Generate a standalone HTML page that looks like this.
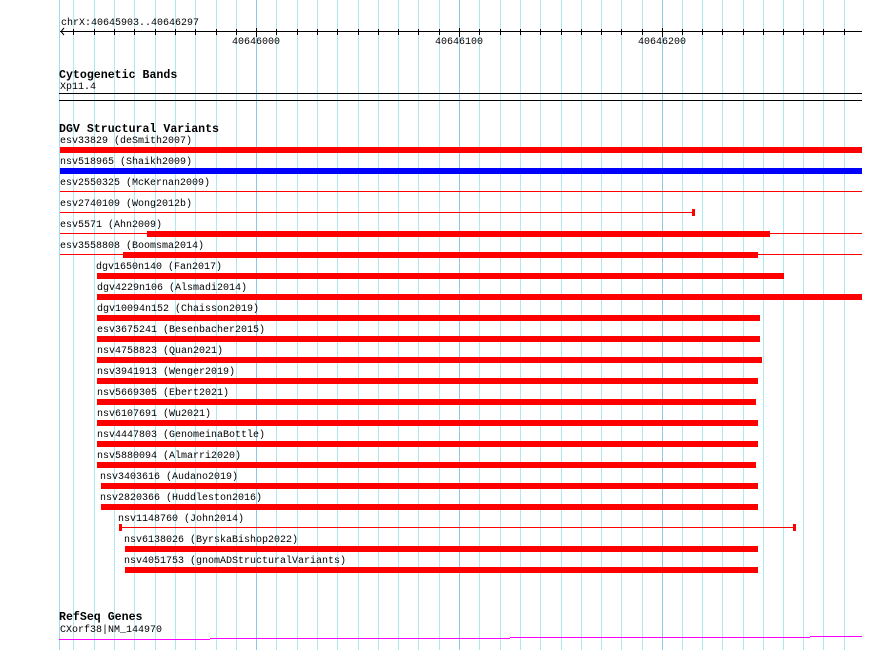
<!DOCTYPE html>
<html><head><meta charset="utf-8"><style>
html,body{margin:0;padding:0;background:#fff;width:890px;height:650px;overflow:hidden}
svg{display:block}
text{font-family:"Liberation Mono","DejaVu Sans Mono",monospace;font-size:10px;fill:#000}
.h{font-weight:bold;font-size:11.6px}
</style></head><body>
<svg width="890" height="650" viewBox="0 0 890 650" xmlns="http://www.w3.org/2000/svg" shape-rendering="crispEdges">
<g id="grid" stroke="#aee9ef" stroke-width="1">
<line x1="59.5" y1="0" x2="59.5" y2="650" stroke="#9fdcea"/>
<line x1="73.5" y1="0" x2="73.5" y2="650"/>
<line x1="94.5" y1="0" x2="94.5" y2="650"/>
<line x1="114.5" y1="0" x2="114.5" y2="650"/>
<line x1="134.5" y1="0" x2="134.5" y2="650"/>
<line x1="155.5" y1="0" x2="155.5" y2="650"/>
<line x1="175.5" y1="0" x2="175.5" y2="650"/>
<line x1="195.5" y1="0" x2="195.5" y2="650"/>
<line x1="216.5" y1="0" x2="216.5" y2="650"/>
<line x1="236.5" y1="0" x2="236.5" y2="650"/>
<line x1="256.5" y1="0" x2="256.5" y2="650" stroke="#8cc8ea"/>
<line x1="276.5" y1="0" x2="276.5" y2="650"/>
<line x1="297.5" y1="0" x2="297.5" y2="650"/>
<line x1="317.5" y1="0" x2="317.5" y2="650"/>
<line x1="337.5" y1="0" x2="337.5" y2="650"/>
<line x1="358.5" y1="0" x2="358.5" y2="650"/>
<line x1="378.5" y1="0" x2="378.5" y2="650"/>
<line x1="398.5" y1="0" x2="398.5" y2="650"/>
<line x1="418.5" y1="0" x2="418.5" y2="650"/>
<line x1="439.5" y1="0" x2="439.5" y2="650"/>
<line x1="459.5" y1="0" x2="459.5" y2="650" stroke="#8cc8ea"/>
<line x1="479.5" y1="0" x2="479.5" y2="650"/>
<line x1="500.5" y1="0" x2="500.5" y2="650"/>
<line x1="520.5" y1="0" x2="520.5" y2="650"/>
<line x1="540.5" y1="0" x2="540.5" y2="650"/>
<line x1="561.5" y1="0" x2="561.5" y2="650"/>
<line x1="581.5" y1="0" x2="581.5" y2="650"/>
<line x1="601.5" y1="0" x2="601.5" y2="650"/>
<line x1="621.5" y1="0" x2="621.5" y2="650"/>
<line x1="642.5" y1="0" x2="642.5" y2="650"/>
<line x1="662.5" y1="0" x2="662.5" y2="650" stroke="#8cc8ea"/>
<line x1="682.5" y1="0" x2="682.5" y2="650"/>
<line x1="702.5" y1="0" x2="702.5" y2="650"/>
<line x1="722.5" y1="0" x2="722.5" y2="650"/>
<line x1="743.5" y1="0" x2="743.5" y2="650"/>
<line x1="763.5" y1="0" x2="763.5" y2="650"/>
<line x1="783.5" y1="0" x2="783.5" y2="650"/>
<line x1="803.5" y1="0" x2="803.5" y2="650"/>
<line x1="823.5" y1="0" x2="823.5" y2="650"/>
<line x1="844.5" y1="0" x2="844.5" y2="650"/>
</g>
<!-- ruler -->
<text x="61" y="25">chrX:40645903..40646297</text>
<line x1="60" y1="31.5" x2="862" y2="31.5" stroke="#000"/>
<path d="M64 28 L61 31.5 L64 35" fill="none" stroke="#000" shape-rendering="auto"/>
<g stroke="#000">
<line x1="73.5" y1="29" x2="73.5" y2="35"/><line x1="94.5" y1="29" x2="94.5" y2="35"/><line x1="114.5" y1="29" x2="114.5" y2="35"/><line x1="134.5" y1="29" x2="134.5" y2="35"/><line x1="155.5" y1="29" x2="155.5" y2="35"/><line x1="175.5" y1="29" x2="175.5" y2="35"/><line x1="195.5" y1="29" x2="195.5" y2="35"/><line x1="216.5" y1="29" x2="216.5" y2="35"/><line x1="236.5" y1="29" x2="236.5" y2="35"/>
<line x1="256.5" y1="28" x2="256.5" y2="37"/>
<line x1="276.5" y1="29" x2="276.5" y2="35"/><line x1="297.5" y1="29" x2="297.5" y2="35"/><line x1="317.5" y1="29" x2="317.5" y2="35"/><line x1="337.5" y1="29" x2="337.5" y2="35"/><line x1="358.5" y1="29" x2="358.5" y2="35"/><line x1="378.5" y1="29" x2="378.5" y2="35"/><line x1="398.5" y1="29" x2="398.5" y2="35"/><line x1="418.5" y1="29" x2="418.5" y2="35"/><line x1="439.5" y1="29" x2="439.5" y2="35"/>
<line x1="459.5" y1="28" x2="459.5" y2="37"/>
<line x1="479.5" y1="29" x2="479.5" y2="35"/><line x1="500.5" y1="29" x2="500.5" y2="35"/><line x1="520.5" y1="29" x2="520.5" y2="35"/><line x1="540.5" y1="29" x2="540.5" y2="35"/><line x1="561.5" y1="29" x2="561.5" y2="35"/><line x1="581.5" y1="29" x2="581.5" y2="35"/><line x1="601.5" y1="29" x2="601.5" y2="35"/><line x1="621.5" y1="29" x2="621.5" y2="35"/><line x1="642.5" y1="29" x2="642.5" y2="35"/>
<line x1="662.5" y1="28" x2="662.5" y2="37"/>
<line x1="682.5" y1="29" x2="682.5" y2="35"/><line x1="702.5" y1="29" x2="702.5" y2="35"/><line x1="722.5" y1="29" x2="722.5" y2="35"/><line x1="743.5" y1="29" x2="743.5" y2="35"/><line x1="763.5" y1="29" x2="763.5" y2="35"/><line x1="783.5" y1="29" x2="783.5" y2="35"/><line x1="803.5" y1="29" x2="803.5" y2="35"/><line x1="823.5" y1="29" x2="823.5" y2="35"/><line x1="844.5" y1="29" x2="844.5" y2="35"/>
</g>
<text x="256" y="44" text-anchor="middle">40646000</text>
<text x="459" y="44" text-anchor="middle">40646100</text>
<text x="662" y="44" text-anchor="middle">40646200</text>
<!-- cytoband -->
<text class="h" x="59" y="78">Cytogenetic Bands</text>
<text x="60" y="89">Xp11.4</text>
<line x1="59" y1="93.5" x2="862" y2="93.5" stroke="#000"/>
<line x1="59" y1="100.5" x2="862" y2="100.5" stroke="#000"/>
<!-- DGV -->
<text class="h" x="59" y="132">DGV Structural Variants</text>
<g fill="#f00">
<rect x="60" y="147" width="802" height="6"/>
<rect x="60" y="168" width="802" height="6" fill="#00f"/>
<rect x="60" y="191" width="802" height="1"/>
<rect x="60" y="212" width="633" height="1"/>
<rect x="692" y="209" width="3" height="7"/>
<rect x="60" y="233" width="802" height="1"/>
<rect x="147" y="231" width="623" height="6"/>
<rect x="60" y="254" width="802" height="1"/>
<rect x="123" y="252" width="635" height="6"/>
<rect x="97" y="273" width="687" height="6"/>
<rect x="97" y="294" width="765" height="6"/>
<rect x="97" y="315" width="663" height="6"/>
<rect x="97" y="336" width="663" height="6"/>
<rect x="97" y="357" width="665" height="6"/>
<rect x="97" y="378" width="661" height="6"/>
<rect x="97" y="399" width="659" height="6"/>
<rect x="97" y="420" width="661" height="6"/>
<rect x="97" y="441" width="661" height="6"/>
<rect x="97" y="462" width="659" height="6"/>
<rect x="101" y="483" width="657" height="6"/>
<rect x="101" y="504" width="657" height="6"/>
<rect x="120" y="527" width="675" height="1"/>
<rect x="119" y="524" width="3" height="7"/>
<rect x="793" y="524" width="3" height="7"/>
<rect x="125" y="546" width="633" height="6"/>
<rect x="125" y="567" width="633" height="6"/>
</g>
<g>
<text x="60" y="143">esv33829 (deSmith2007)</text>
<text x="60" y="164">nsv518965 (Shaikh2009)</text>
<text x="60" y="185">esv2550325 (McKernan2009)</text>
<text x="60" y="206">esv2740109 (Wong2012b)</text>
<text x="60" y="227">esv5571 (Ahn2009)</text>
<text x="60" y="248">esv3558808 (Boomsma2014)</text>
<text x="96" y="269">dgv1650n140 (Fan2017)</text>
<text x="97" y="290">dgv4229n106 (Alsmadi2014)</text>
<text x="97" y="311">dgv10094n152 (Chaisson2019)</text>
<text x="97" y="332">esv3675241 (Besenbacher2015)</text>
<text x="97" y="353">nsv4758823 (Quan2021)</text>
<text x="97" y="374">nsv3941913 (Wenger2019)</text>
<text x="97" y="395">nsv5669305 (Ebert2021)</text>
<text x="97" y="416">nsv6107691 (Wu2021)</text>
<text x="97" y="437">nsv4447803 (GenomeinaBottle)</text>
<text x="97" y="458">nsv5880094 (Almarri2020)</text>
<text x="100" y="479">nsv3403616 (Audano2019)</text>
<text x="100" y="500">nsv2820366 (Huddleston2016)</text>
<text x="118" y="521">nsv1148760 (John2014)</text>
<text x="124" y="542">nsv6138026 (ByrskaBishop2022)</text>
<text x="124" y="563">nsv4051753 (gnomADStructuralVariants)</text>
</g>
<!-- RefSeq -->
<text class="h" x="59" y="620">RefSeq Genes</text>
<text x="60" y="632">CXorf38|NM_144970</text>
<g fill="#f0f">
<rect x="59" y="639" width="151" height="1"/>
<rect x="210" y="638" width="300" height="1"/>
<rect x="510" y="637" width="300" height="1"/>
<rect x="810" y="636" width="52" height="1"/>
</g>
</svg>
</body></html>
